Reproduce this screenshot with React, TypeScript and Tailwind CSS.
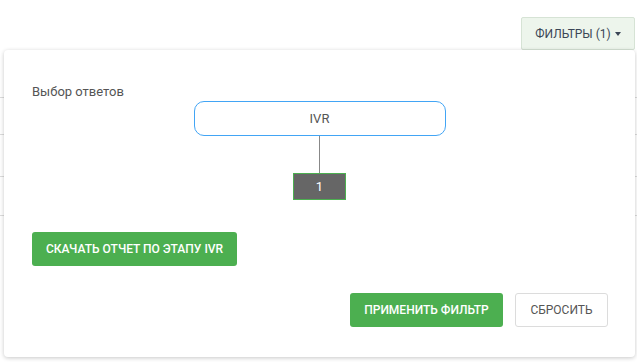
import React from "react";

function BackgroundTable() {
  // table rows behind the dropdown; only their edges show
  return (
    <div className="mt-[47px]">
      <div className="h-[37px] border-t border-[#dcdcdc]" />
      <div className="h-[42px] border-t border-[#dcdcdc]" />
      <div className="h-[40px] border-t border-b border-[#dcdcdc]" />
    </div>
  );
}

function AnswerTree() {
  return (
    <div className="flex flex-col items-center">
      <div className="w-[252px] h-[35px] rounded-[10px] border border-[#42a5f5] flex items-center justify-center text-[13px] text-[#555]">
        IVR
      </div>
      <div className="w-px h-[37px] bg-[#888]" />
      <div className="w-[53px] h-[27px] bg-[#666] border border-[#4caf50] flex items-center justify-center text-[13px] text-white">
        1
      </div>
    </div>
  );
}

export default function App() {
  return (
    <div className="relative w-[637px] h-[362px] bg-white overflow-hidden font-['Roboto',sans-serif]">
      <div className="flex justify-end pt-[17px] pr-[2px]">
        <button className="h-[33px] w-[114px] bg-[#edf5ec] border border-[#d6e3d5] rounded-[2px] flex items-center justify-center gap-1 text-[12px] text-[#3b4656]">
          ФИЛЬТРЫ (1)
          <span className="inline-block border-x-[3px] border-x-transparent border-t-[4px] border-t-[#3b4656]" />
        </button>
      </div>

      <BackgroundTable />

      <div className="absolute left-[4px] top-[50px] w-[631px] h-[307px] bg-white rounded-[4px] shadow-[0_1px_4px_rgba(0,0,0,0.22)] pt-[34px] pl-[28px] pr-[27px] flex flex-col">
        <div className="text-[13px] leading-[15px] text-[#555]">Выбор ответов</div>

        <div className="mt-[2px] -ml-[28px] -mr-[27px]">
          <AnswerTree />
        </div>

        <div className="mt-[32px]">
          <button className="h-[34px] w-[205px] bg-[#4caf50] rounded-[3px] text-white text-[12px] font-medium uppercase">
            Скачать отчет по этапу IVR
          </button>
        </div>

        <div className="mt-[27px] flex justify-end gap-[12px]">
          <button className="h-[34px] w-[153px] bg-[#4caf50] rounded-[3px] text-white text-[12px] font-medium uppercase">
            Применить фильтр
          </button>
          <button className="h-[34px] w-[93px] bg-white border border-[#dcdcdc] rounded-[3px] text-[#555] text-[12px] uppercase">
            Сбросить
          </button>
        </div>
      </div>
    </div>
  );
}
